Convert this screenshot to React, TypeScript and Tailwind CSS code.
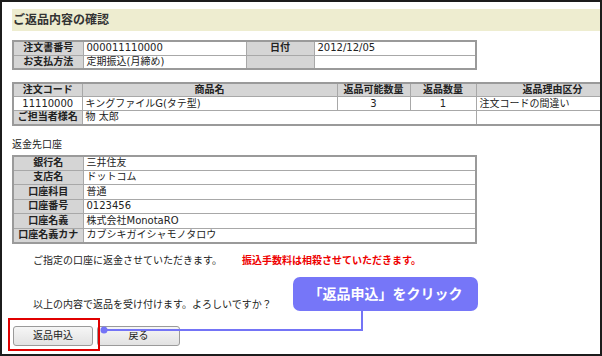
import React from "react";

const font = { fontFamily: '"DejaVu Sans", "Noto Sans CJK JP", sans-serif' };

const th =
  "border border-[#a8a8a8] bg-[#d5d5d5] font-bold text-center px-[2px] py-0 leading-[12px] whitespace-nowrap overflow-hidden";
const td =
  "border border-[#a8a8a8] bg-white px-[3px] py-0 leading-[12px] whitespace-nowrap overflow-hidden";

function OrderTable() {
  return (
    <table className="table-fixed border-collapse border-2 border-[#9a9a9a] w-[463px] mt-[9px]">
      <colgroup>
        <col className="w-[70px]" />
        <col className="w-[163px]" />
        <col className="w-[68px]" />
        <col className="w-[162px]" />
      </colgroup>
      <tbody>
        <tr className="h-[14px]">
          <td className={th}>注文書番号</td>
          <td className={td}>000011110000</td>
          <td className={th}>日付</td>
          <td className={td}>2012/12/05</td>
        </tr>
        <tr className="h-[14px]">
          <td className={th}>お支払方法</td>
          <td className={td}>定期振込(月締め)</td>
          <td className={th}></td>
          <td className={td}></td>
        </tr>
      </tbody>
    </table>
  );
}

function ItemTable() {
  return (
    <table className="table-fixed border-collapse border-2 border-[#9a9a9a] w-[600px] mt-[12px]">
      <colgroup>
        <col className="w-[69px]" />
        <col className="w-[255px]" />
        <col className="w-[73px]" />
        <col className="w-[66px]" />
        <col className="w-[137px]" />
      </colgroup>
      <tbody>
        <tr className="h-[12px]">
          <td className={th}>注文コード</td>
          <td className={th}>商品名</td>
          <td className={th}>返品可能数量</td>
          <td className={th}>返品数量</td>
          <td className={th + " text-left pl-[46px]"}>返品理由区分</td>
        </tr>
        <tr className="h-[14px]">
          <td className={td + " text-center"}>11110000</td>
          <td className={td}>キングファイルG(タテ型)</td>
          <td className={td + " text-center"}>3</td>
          <td className={td + " text-center"}>1</td>
          <td className={td}>注文コードの間違い</td>
        </tr>
        <tr className="h-[14px]">
          <td className={th}>ご担当者様名</td>
          <td className={td} colSpan={3}>
            物 太郎
          </td>
          <td className={td}></td>
        </tr>
      </tbody>
    </table>
  );
}

const bankRows: [string, string][] = [
  ["銀行名", "三井住友"],
  ["支店名", "ドットコム"],
  ["口座科目", "普通"],
  ["口座番号", "0123456"],
  ["口座名義", "株式会社MonotaRO"],
  ["口座名義カナ", "カブシキガイシャモノタロウ"],
];

function BankTable() {
  return (
    <table className="table-fixed border-collapse border-2 border-[#9a9a9a] w-[463px]">
      <colgroup>
        <col className="w-[70px]" />
        <col className="w-[393px]" />
      </colgroup>
      <tbody>
        {bankRows.map(([label, value]) => (
          <tr key={label} className="h-[14.5px]">
            <td className={th}>{label}</td>
            <td className={td}>{value}</td>
          </tr>
        ))}
      </tbody>
    </table>
  );
}

export default function App() {
  return (
    <div
      className="relative w-[602px] h-[356px] border-2 border-[#1c1c1c] overflow-hidden bg-white text-[10px] text-[#222]"
      style={font}
    >
      <div className="pl-[10px] pt-[7px]">
        <div className="h-[22px] bg-[#eeedd0] flex items-center pl-[1px] text-[12px] font-bold text-[#333]">
          ご返品内容の確認
        </div>

        <OrderTable />
        <ItemTable />

        <div className="mt-[12px] h-[14px] leading-[14px]">返金先口座</div>
        <div className="mt-[3px]">
          <BankTable />
        </div>

        <div className="mt-[10px] pl-[21px] h-[14px] leading-[14px] flex">
          <span>ご指定の口座に返金させていただきます。</span>
          <span className="ml-[20px] text-[#ee0000] font-bold">
            振込手数料は相殺させていただきます。
          </span>
        </div>

        <div className="mt-[30px] pl-[21px] h-[14px] leading-[14px]">
          以上の内容で返品を受け付けます。よろしいですか？
        </div>

        <div className="mt-[14px] ml-[1px] flex gap-[4px]">
          <button className="w-[80px] h-[20px] rounded-[3px] border border-[#9a9a9a] bg-gradient-to-b from-[#f6f6f6] to-[#e2e2e2] text-[10px] leading-[18px]">
            返品申込
          </button>
          <button className="w-[83px] h-[20px] rounded-[3px] border border-[#9a9a9a] bg-gradient-to-b from-[#f6f6f6] to-[#e2e2e2] text-[10px] leading-[18px]">
            戻る
          </button>
        </div>
      </div>

      {/* red highlight box around the submit button */}
      <div className="absolute left-[6px] top-[316px] w-[92px] h-[33px] border-2 border-[#e00000]" />

      {/* callout connector */}
      <svg className="absolute left-0 top-0" width="600" height="354">
        <line x1="102" y1="328" x2="361" y2="328" stroke="#7474f6" strokeWidth="2" />
        <line x1="360" y1="329" x2="360" y2="305" stroke="#7474f6" strokeWidth="2" />
        <circle cx="102" cy="328" r="3.5" fill="#7474f6" />
      </svg>

      <div className="absolute left-[291px] top-[275px] w-[185px] h-[34px] rounded-[7px] bg-[#7676f8] flex items-center justify-center text-white font-bold text-[14px]">
        「返品申込」をクリック
      </div>
    </div>
  );
}
